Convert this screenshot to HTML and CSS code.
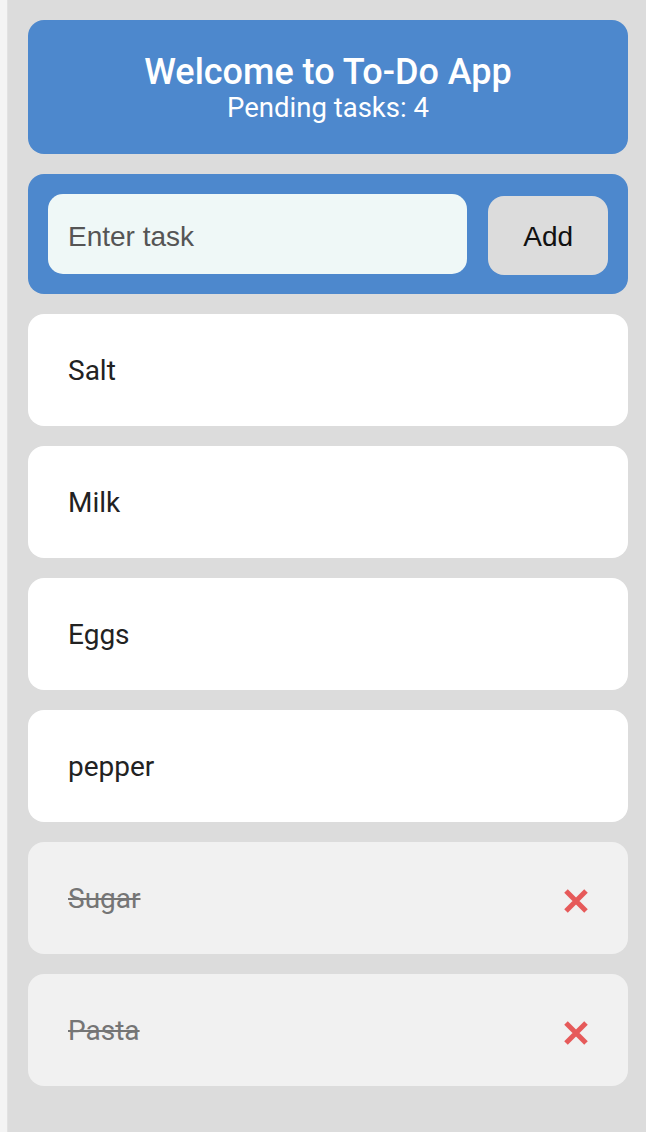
FILE: index.html
```html
<!DOCTYPE html>
<html>
<head>
<meta charset="utf-8">
<link rel="stylesheet" href="styles.css">
</head>
<body>
<div class="app">
  <header class="header">
    <h1 class="title">Welcome to To-Do App</h1>
    <p class="subtitle">Pending tasks: 4</p>
  </header>
  <form class="add-form">
    <input class="task-input" type="text" placeholder="Enter task">
    <button class="add-btn" type="button">Add</button>
  </form>
  <ul class="list">
    <li class="item"><span class="item-text">Salt</span></li>
    <li class="item"><span class="item-text">Milk</span></li>
    <li class="item"><span class="item-text">Eggs</span></li>
    <li class="item"><span class="item-text">pepper</span></li>
    <li class="item done"><span class="item-text">Sugar</span>
      <svg class="del" viewBox="0 0 28 28" width="28" height="28"><path d="M4 4L24 24M24 4L4 24" stroke="#e65a5a" stroke-width="5"/></svg>
    </li>
    <li class="item done"><span class="item-text">Pasta</span>
      <svg class="del" viewBox="0 0 28 28" width="28" height="28"><path d="M4 4L24 24M24 4L4 24" stroke="#e65a5a" stroke-width="5"/></svg>
    </li>
  </ul>
</div>
</body>
</html>
```
FILE: styles.css
```css
html, body {
  margin: 0;
  padding: 0;
  background: #f4f4f4;
  font-family: Roboto, "Liberation Sans", sans-serif;
}
.app {
  margin-left: 7px;
  border-left: 1px solid #e2e2e2;
  background: #dcdcdc;
  padding: 20px 18px 47px 20px;
  min-height: 1132px;
  box-sizing: border-box;
}
.header {
  width: 600px;
  height: 134px;
  box-sizing: border-box;
  background: #4d88cd;
  border-radius: 16px;
  color: #fff;
  text-align: center;
  padding-top: 31px;
}
.title {
  margin: 0;
  font-size: 36px;
  font-weight: 500;
  line-height: 42px;
}
.subtitle {
  margin: 0;
  font-size: 27.5px;
  line-height: 30px;
}
.add-form {
  width: 600px;
  box-sizing: border-box;
  margin: 20px 0 0 0;
  background: #4d88cd;
  border-radius: 16px;
  padding: 20px;
  display: flex;
  align-items: center;
  gap: 21px;
  height: 120px;
}
.task-input {
  width: 420px;
  height: 80px;
  box-sizing: border-box;
  border: none;
  border-radius: 15px;
  background: #eff8f7;
  padding: 5px 20px 0 20px;
  font-family: "Liberation Sans", Arial, sans-serif;
  font-size: 28px;
  color: #222;
  outline: none;
}
.task-input::placeholder {
  color: #555;
}
.add-btn {
  width: 120px;
  height: 79px;
  border: none;
  border-radius: 16px;
  background: #dcdcdc;
  font-family: "Liberation Sans", Arial, sans-serif;
  font-size: 28px;
  color: #111;
  margin-top: 2px;
  padding: 4px 0 0 0;
}
.list {
  list-style: none;
  margin: 20px 0 0 0;
  padding: 0;
  width: 600px;
  display: flex;
  flex-direction: column;
  gap: 20px;
}
.item {
  height: 112px;
  box-sizing: border-box;
  background: #fff;
  border-radius: 16px;
  padding: 0 38px 0 40px;
  display: flex;
  align-items: center;
  justify-content: space-between;
  font-size: 28px;
  color: #222;
}
.item.done {
  background: #f1f1f1;
  color: #757575;
}
.item.done .item-text {
  text-decoration: line-through;
}
.del {
  display: block;
  margin-top: 6px;
}
```
